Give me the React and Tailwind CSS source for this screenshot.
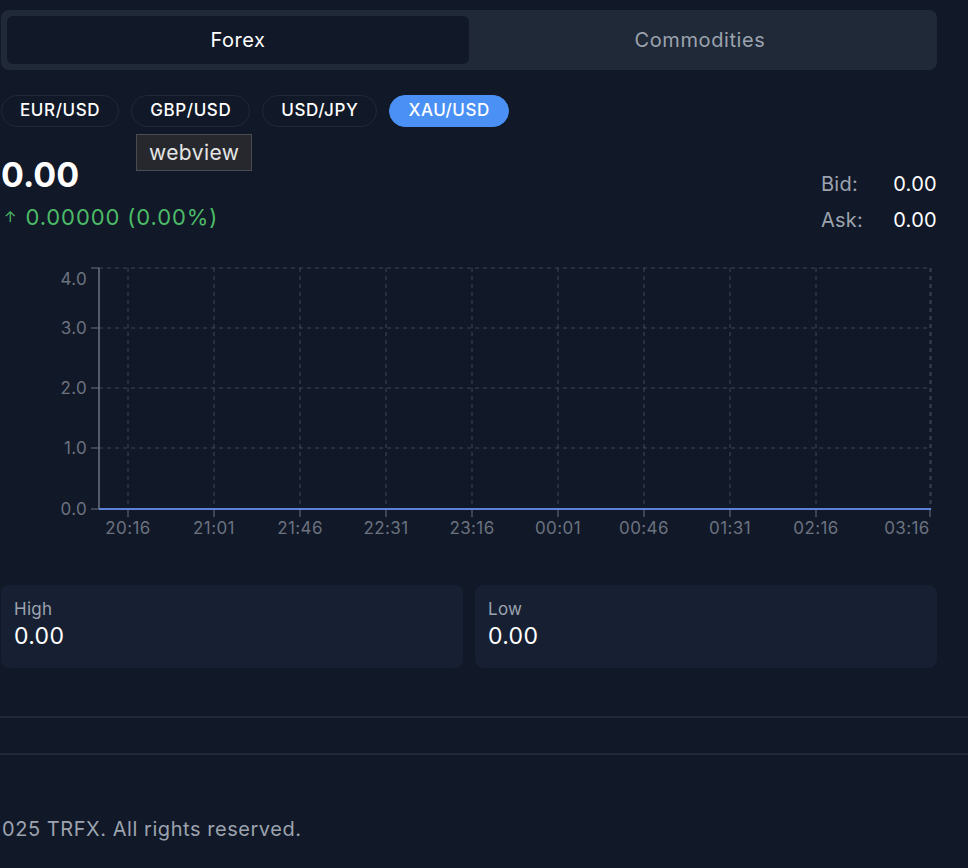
import React, { useState } from "react";

const pairs = ["EUR/USD", "GBP/USD", "USD/JPY", "XAU/USD"];
const yTicks = [
  { label: "4.0", y: 12 },
  { label: "3.0", y: 72 },
  { label: "2.0", y: 132 },
  { label: "1.0", y: 192 },
  { label: "0.0", y: 253 },
];
const xTicks = [
  { label: "20:16", x: 127 },
  { label: "21:01", x: 213 },
  { label: "21:46", x: 299 },
  { label: "22:31", x: 385 },
  { label: "23:16", x: 471 },
  { label: "00:01", x: 557 },
  { label: "00:46", x: 643 },
  { label: "01:31", x: 729 },
  { label: "02:16", x: 815 },
  { label: "03:16", x: 929 },
];

const PriceChart = () => {
  const left = 98;
  const right = 930;
  const top = 12;
  const bottom = 253;
  return (
    <svg width="937" height="290" viewBox="0 0 937 290" className="block">
      {/* grid */}
      {yTicks.slice(0, 4).map((t) => (
        <line key={t.label} x1={left} x2={right} y1={t.y} y2={t.y} stroke="#404859" strokeDasharray="4 4" />
      ))}
      {xTicks.map((t) => (
        <line key={t.label} x1={t.x} x2={t.x} y1={top} y2={bottom} stroke="#404859" strokeDasharray="4 4" />
      ))}
      <line x1={right} x2={right} y1={top} y2={bottom} stroke="#404859" strokeDasharray="4 4" />
      {/* y axis */}
      <line x1={left} x2={left} y1={top} y2={bottom} stroke="#6b7280" strokeWidth="1.5" />
      {yTicks.map((t) => (
        <g key={t.label}>
          <line x1={left - 8} x2={left} y1={t.y} y2={t.y} stroke="#6b7280" />
          <text
            x={left - 12}
            y={t.y === top ? t.y + 17 : t.y + 6}
            textAnchor="end"
            fontSize="17"
            fill="#6b7280"
            fontFamily="Inter, sans-serif"
            letterSpacing="0.3"
          >
            {t.label}
          </text>
        </g>
      ))}
      {/* x axis ticks */}
      {xTicks.map((t) => (
        <g key={t.label}>
          <line x1={t.x} x2={t.x} y1={bottom} y2={bottom + 8} stroke="#6b7280" />
          <text
            x={t.x === 929 ? t.x - 23 : t.x}
            y={bottom + 25}
            textAnchor="middle"
            fontSize="17"
            fill="#6b7280"
            fontFamily="Inter, sans-serif"
            letterSpacing="0.4"
          >
            {t.label}
          </text>
        </g>
      ))}
      {/* data line */}
      <line x1={left} x2={right} y1={bottom} y2={bottom} stroke="#5b82d6" strokeWidth="2" />
    </svg>
  );
};

const App = () => {
  const [tab, setTab] = useState("forex");
  const [pair, setPair] = useState("XAU/USD");

  return (
    <div className="min-h-screen w-full bg-[#111827] font-['Inter',sans-serif] overflow-hidden">
      <div className="w-[937px] pl-[1px]">
        {/* Tabs */}
        <div className="mt-[10px] h-[60px] rounded-lg bg-[#1f2937] p-[6px] grid grid-cols-2">
          <button
            onClick={() => setTab("forex")}
            className={`rounded-md text-[20px] tracking-[0.5px] ${tab === "forex" ? "bg-[#111827] text-white" : "text-[#9ca3af]"}`}
          >
            Forex
          </button>
          <button
            onClick={() => setTab("commodities")}
            className={`rounded-md text-[20px] tracking-[0.6px] ${tab === "commodities" ? "bg-[#111827] text-white" : "text-[#9ca3af]"}`}
          >
            Commodities
          </button>
        </div>

        {/* Pairs */}
        <div className="relative mt-[25px] flex gap-[12px]">
          {pairs.map((p) => (
            <button
              key={p}
              onClick={() => setPair(p)}
              className={`h-[32px] rounded-full text-[17px] font-medium tracking-[0.6px] ${
                pair === p
                  ? "bg-[#4a90f5] text-white border border-[#4a90f5] px-[18px]"
                  : "border border-[#1f2937] text-white px-[18px]"
              }`}
            >
              {p}
            </button>
          ))}
          <div className="absolute left-[135px] top-[39px] h-[37px] border border-[#4a4c52] bg-[#26282d] px-[12px] text-[21px] leading-[35px] tracking-[0.4px] text-[#e5e5e5]">
            webview
          </div>
        </div>

        {/* Price */}
        <div className="mt-[28px] flex justify-between">
          <div>
            <div className="text-[34px] font-bold leading-[40px] text-white">0.00</div>
            <div className="mt-[8px] flex items-center text-[22px] leading-[28px] tracking-[0.9px] text-[#4cbb67]">
              <span className="mr-[8px] ml-[3px] text-[15px]">↑</span>
              0.00000 (0.00%)
            </div>
          </div>
          <div className="mt-[11px] grid grid-cols-[auto_auto] gap-x-[30px] text-[20px] leading-[36px] tracking-[0.3px]">
            <span className="text-[#9ca3af]">Bid:</span>
            <span className="text-white">0.00</span>
            <span className="text-[#9ca3af]">Ask:</span>
            <span className="text-white">0.00</span>
          </div>
        </div>

        {/* Chart */}
        <div className="mt-[18px]">
          <PriceChart />
        </div>

        {/* High / Low */}
        <div className="mt-[39px] grid grid-cols-2 gap-[12px]">
          <div className="h-[83px] rounded-lg bg-[#172032] px-[13px] pt-[12px]">
            <div className="text-[17px] leading-[24px] tracking-[0.3px] text-[#9ca3af]">High</div>
            <div className="text-[23px] leading-[30px] tracking-[0.3px] text-white">0.00</div>
          </div>
          <div className="h-[83px] rounded-lg bg-[#172032] px-[13px] pt-[12px]">
            <div className="text-[17px] leading-[24px] tracking-[0.3px] text-[#9ca3af]">Low</div>
            <div className="text-[23px] leading-[30px] tracking-[0.3px] text-white">0.00</div>
          </div>
        </div>
      </div>

      <div className="mt-[48px] border-t-2 border-[#1f2937]" />
      <div className="mt-[35px] border-t-2 border-[#1f2937]" />
      <div className="mt-[60px] pl-[2px] text-[20px] leading-[28px] tracking-[0.55px] text-[#9ca3af]">
        025 TRFX. All rights reserved.
      </div>
    </div>
  );
};

export default App;
